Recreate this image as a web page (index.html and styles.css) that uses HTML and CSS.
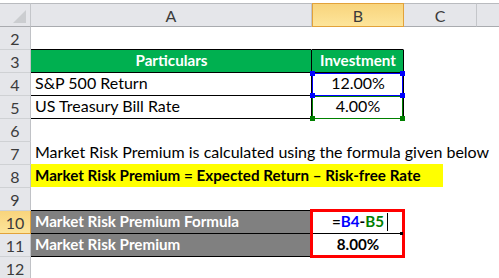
FILE: index.html
```html
<!DOCTYPE html>
<html>
<head>
<meta charset="utf-8">
<link rel="stylesheet" href="styles.css">
</head>
<body>
<div class="sheet">
  <div class="hd corner"><span class="tri"></span></div>
  <div class="hd col">A</div>
  <div class="hd col sel">B</div>
  <div class="hd col">C</div>
  <div class="hd col last"></div>

  <div class="rh">2</div>
  <div class="c tb"></div>
  <div class="c tb"></div>
  <div class="c"></div>
  <div class="c"></div>

  <div class="rh">3</div>
  <div class="c green br bb center bold">Particulars</div>
  <div class="c green br bb center bold">Investment</div>
  <div class="c"></div>
  <div class="c"></div>

  <div class="rh">4</div>
  <div class="c br bb">S&amp;P 500 Return</div>
  <div class="c br bb center ref ref-blue">12.00%<i class="h tl"></i><i class="h tr"></i><i class="h bl"></i><i class="h brc"></i></div>
  <div class="c"></div>
  <div class="c"></div>

  <div class="rh">5</div>
  <div class="c br bb">US Treasury Bill Rate</div>
  <div class="c br bb center ref ref-green">4.00%<i class="h bl"></i><i class="h brc"></i></div>
  <div class="c"></div>
  <div class="c"></div>

  <div class="rh">6</div>
  <div class="c"></div>
  <div class="c"></div>
  <div class="c"></div>
  <div class="c"></div>

  <div class="rh">7</div>
  <div class="c span3 plain">Market Risk Premium is calculated using the formula given below</div>
  <div class="c"></div>

  <div class="rh">8</div>
  <div class="c span3"><span class="yellow bold">Market Risk Premium = Expected Return – Risk-free Rate</span></div>
  <div class="c"></div>

  <div class="rh">9</div>
  <div class="c tb"></div>
  <div class="c"></div>
  <div class="c"></div>
  <div class="c"></div>

  <div class="rh sel">10</div>
  <div class="c gray br bb bold">Market Risk Premium Formula</div>
  <div class="c bb center bold active">=<span class="blue">B4</span>-<span class="greentxt">B5</span><span class="caret"></span><i class="fill"></i></div>
  <div class="c"></div>
  <div class="c"></div>

  <div class="rh">11</div>
  <div class="c gray br bb bold">Market Risk Premium</div>
  <div class="c bb center bold">8.00%</div>
  <div class="c"></div>
  <div class="c"></div>

  <div class="rh">12</div>
  <div class="c"></div>
  <div class="c"></div>
  <div class="c"></div>
  <div class="c"></div>
</div>
</body>
</html>
```

FILE: styles.css
```css
html, body {
  margin: 0;
  padding: 0;
  background: #ffffff;
  overflow: hidden;
}

body {
  width: 499px;
  height: 278px;
  font-family: Lato, "Open Sans", sans-serif;
  font-size: 16px;
  color: #000;
}

.sheet {
  display: grid;
  grid-template-columns: 31px 281px 92px 73px 1fr;
  grid-template-rows: 27px repeat(11, 23px);
  width: 499px;
}

.hd {
  margin-top: 3px;
  background: #e5e6ea;
  border-top: 1px solid #b9bbbf;
  border-bottom: 1px solid #a9abaf;
  border-right: 1px solid #c4c6ca;
  box-sizing: border-box;
  display: flex;
  align-items: center;
  justify-content: center;
  color: #3b3b3b;
  font-size: 16px;
}

.hd.last { border-right: none; }

.corner {
  position: relative;
}

.tri {
  position: absolute;
  right: 4px;
  bottom: 3px;
  width: 0;
  height: 0;
  border-left: 13px solid transparent;
  border-bottom: 13px solid #cbcdd0;
}

.hd.sel {
  background: linear-gradient(#f8d47c, #fde59b);
  border-top-color: #e2a23a;
  border-bottom-color: #e2a23a;
  border-left: 1px solid #e2a23a;
  border-right-color: #e2a23a;
  color: #3b3b3b;
}

.rh {
  background: #e5e6ea;
  border-right: 1px solid #c0c2c6;
  border-bottom: 1px solid #cfd1d4;
  box-sizing: border-box;
  display: flex;
  align-items: center;
  justify-content: center;
  color: #3b3b3b;
  font-size: 16px;
  padding-top: 1px;
}

.rh.sel {
  background: linear-gradient(#f8d47c, #fde59b);
  border-right-color: #e2a23a;
  border-bottom-color: #e2a23a;
}

.c {
  box-sizing: border-box;
  border-right: 1px solid transparent;
  border-bottom: 1px solid transparent;
  display: flex;
  align-items: flex-end;
  padding: 0 3px 3px 4px;
  white-space: nowrap;
  line-height: 18px;
  min-width: 0;
}

.span3 {
  grid-column: 2 / span 3;
  padding-left: 0;
  overflow: visible;
}

.span3.plain { padding-left: 4px; }

.tb { border-bottom-color: #000; }
.br { border-right-color: #000; }
.bb { border-bottom-color: #000; }

.center { justify-content: center; }
.bold { font-weight: 700; font-size: 15.2px; }

.green {
  background: #00b050;
  color: #fff;
}

.gray {
  background: #808080;
  color: #fff;
}

.yellow {
  background: #ffff00;
  width: 412px;
  height: 23px;
  box-sizing: border-box;
  padding: 0 0 3px 4px;
  display: flex;
  align-items: flex-end;
  margin-bottom: -3px;
}

.ref {
  position: relative;
  overflow: visible;
}

.ref::after {
  content: "";
  position: absolute;
  left: 0;
  top: 0;
  right: 0;
  bottom: -1px;
  border: 1px solid;
}

.ref-blue::after { border-color: #0000ff; }
.ref-green::after { border-color: #008000; }
.ref-blue { z-index: 2; }

.h {
  position: absolute;
  width: 5px;
  height: 5px;
  z-index: 3;
}

.ref-blue .h { background: #0000ff; }
.ref-green .h { background: #008000; }

.h.tl { left: -2px; top: -2px; }
.h.tr { right: -2px; top: -2px; }
.h.bl { left: -2px; bottom: -3px; }
.h.brc { right: -2px; bottom: -3px; }

.blue { color: #0000ff; }
.greentxt { color: #008000; }

.active {
  position: relative;
}

.active::after {
  content: "";
  position: absolute;
  left: -2px;
  top: -2px;
  right: -2px;
  bottom: -25px;
  border: 3px solid #ff0000;
  z-index: 4;
}

.caret {
  display: inline-block;
  width: 1px;
  height: 18px;
  background: #000;
  margin-left: 3px;
  margin-right: -4px;
  align-self: flex-end;
  margin-bottom: -1px;
}

.fill {
  position: absolute;
  right: 0px;
  bottom: -2px;
  width: 3px;
  height: 3px;
  background: #000;
  z-index: 5;
}
```
